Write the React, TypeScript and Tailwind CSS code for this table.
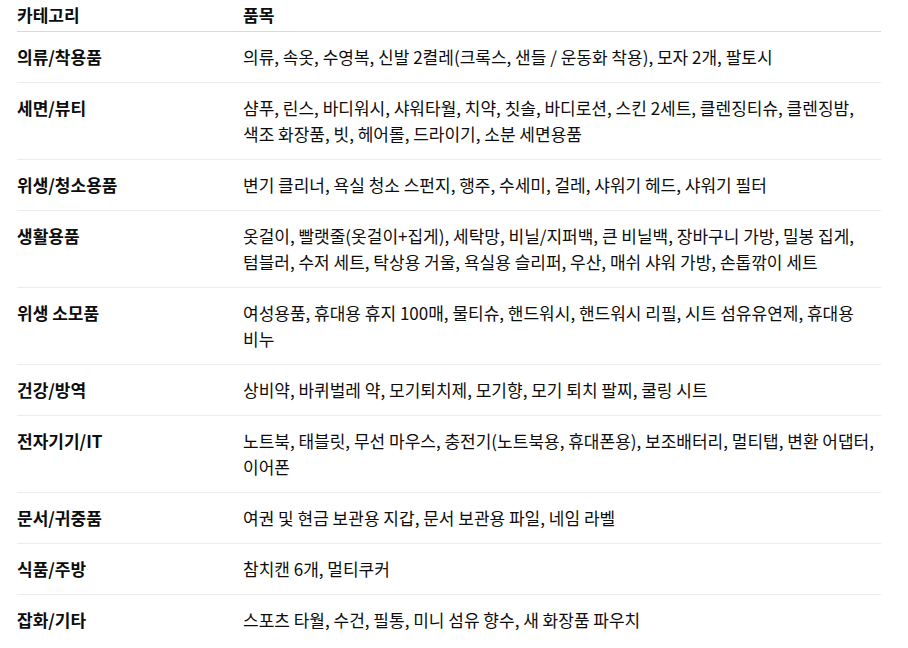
const rows: [string, string][] = [
  ["의류/착용품", "의류, 속옷, 수영복, 신발 2켤레(크록스, 샌들 / 운동화 착용), 모자 2개, 팔토시"],
  ["세면/뷰티", "샴푸, 린스, 바디워시, 샤워타월, 치약, 칫솔, 바디로션, 스킨 2세트, 클렌징티슈, 클렌징밤, 색조 화장품, 빗, 헤어롤, 드라이기, 소분 세면용품"],
  ["위생/청소용품", "변기 클리너, 욕실 청소 스펀지, 행주, 수세미, 걸레, 샤워기 헤드, 샤워기 필터"],
  ["생활용품", "옷걸이, 빨랫줄(옷걸이+집게), 세탁망, 비닐/지퍼백, 큰 비닐백, 장바구니 가방, 밀봉 집게, 텀블러, 수저 세트, 탁상용 거울, 욕실용 슬리퍼, 우산, 매쉬 샤워 가방, 손톱깎이 세트"],
  ["위생 소모품", "여성용품, 휴대용 휴지 100매, 물티슈, 핸드워시, 핸드워시 리필, 시트 섬유유연제, 휴대용 비누"],
  ["건강/방역", "상비약, 바퀴벌레 약, 모기퇴치제, 모기향, 모기 퇴치 팔찌, 쿨링 시트"],
  ["전자기기/IT", "노트북, 태블릿, 무선 마우스, 충전기(노트북용, 휴대폰용), 보조배터리, 멀티탭, 변환 어댑터, 이어폰"],
  ["문서/귀중품", "여권 및 현금 보관용 지갑, 문서 보관용 파일, 네임 라벨"],
  ["식품/주방", "참치캔 6개, 멀티쿠커"],
  ["잡화/기타", "스포츠 타월, 수건, 필통, 미니 섬유 향수, 새 화장품 파우치"],
];

export default function App() {
  return (
    <div className="min-h-screen bg-white px-[17px] font-['Noto_Sans_CJK_KR','Noto_Sans',sans-serif] text-[17px] leading-[26px] text-[#0d0d0d] break-keep">
      <table className="w-[864px] table-fixed border-collapse text-left">
        <colgroup>
          <col className="w-[226px]" />
          <col />
        </colgroup>
        <thead>
          <tr className="border-b border-[#d9d9d9]">
            <th className="pt-[2px] pb-[3px] font-bold">카테고리</th>
            <th className="pt-[2px] pb-[3px] font-bold">품목</th>
          </tr>
        </thead>
        <tbody>
          {rows.map(([cat, items], i) => (
            <tr key={cat} className={i < rows.length - 1 ? "border-b border-[#ececec]" : ""}>
              <td className="py-3 align-top font-bold">{cat}</td>
              <td className="py-3 align-top">{items}</td>
            </tr>
          ))}
        </tbody>
      </table>
    </div>
  );
}
